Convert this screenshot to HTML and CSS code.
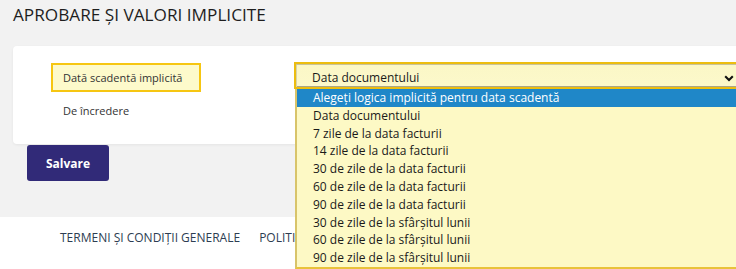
FILE: index.html
```html
<!DOCTYPE html>
<html lang="ro">
<head>
<meta charset="utf-8">
<title>Aprobare și valori implicite</title>
<link rel="stylesheet" href="styles.css">
</head>
<body>
<div class="page">
  <header class="page-head">
    <h1 class="page-title">APROBARE ȘI VALORI IMPLICITE</h1>
  </header>
  <main class="content">
    <section class="card">
      <div class="labels">
        <div class="label label-active">Dată scadentă implicită</div>
        <div class="label">De încredere</div>
      </div>
      <div class="fields">
        <div class="select">
          <span class="select-value">Data documentului</span>
          <svg class="chevron" width="10" height="7" viewBox="0 0 10 7"><path d="M1.2 1.3 L5 5 L8.8 1.3" fill="none" stroke="#111" stroke-width="2.1"/></svg>
        </div>
      </div>
    </section>
    <button class="save-btn" type="button">Salvare</button>
  </main>
  <footer class="footer">
    <a class="footer-link" href="#">TERMENI ȘI CONDIȚII GENERALE</a>
    <a class="footer-link" href="#">POLITICA DE CONFIDENȚIALITATE</a>
  </footer>
  <ul class="dropdown">
    <li class="option option-selected">Alegeți logica implicită pentru data scadentă</li>
    <li class="option">Data documentului</li>
    <li class="option">7 zile de la data facturii</li>
    <li class="option">14 zile de la data facturii</li>
    <li class="option">30 de zile de la data facturii</li>
    <li class="option">60 de zile de la data facturii</li>
    <li class="option">90 de zile de la data facturii</li>
    <li class="option">30 de zile de la sfârșitul lunii</li>
    <li class="option">60 de zile de la sfârșitul lunii</li>
    <li class="option">90 de zile de la sfârșitul lunii</li>
  </ul>
</div>
</body>
</html>
```
FILE: styles.css
```css
html, body {
  margin: 0;
  padding: 0;
}
body {
  background: #f2f2f2;
  font-family: "Open Sans", "DejaVu Sans", sans-serif;
  color: #222;
  overflow: hidden;
}
.page {
  position: relative;
  width: 736px;
  height: 269px;
  overflow: hidden;
}
.page-head {
  padding: 3px 13px 19px;
}
.page-title {
  margin: 0;
  font-size: 17.2px;
  line-height: 24px;
  font-weight: 400;
  color: #1e1e1e;
}
.content {
  padding-left: 13px;
}
.card {
  display: flex;
  width: 780px;
  box-sizing: border-box;
  height: 98px;
  padding: 16px 0 0 38px;
  background: #fff;
  border-radius: 4px;
  box-shadow: 0 1px 3px rgba(0, 0, 0, 0.06);
}
.labels {
  display: flex;
  flex-direction: column;
  gap: 4px;
  width: 150px;
  margin-top: 1px;
}
.label {
  box-sizing: border-box;
  height: 29px;
  padding: 0 10px;
  border: 2px solid transparent;
  font-size: 11px;
  line-height: 25px;
  color: #333;
}
.label-active {
  background: #fdfacb;
  border-color: #f6c612;
}
.fields {
  margin-left: 93px;
}
.select {
  display: flex;
  justify-content: space-between;
  align-items: flex-start;
  box-sizing: border-box;
  width: 450px;
  height: 27px;
  padding: 6px 8px 0 16px;
  border: 2px solid #ecbd10;
  background: linear-gradient(#fbf7c6, #fcf8cb);
  box-shadow: inset 0 1px 0 #c8c39a, inset 1px 0 0 #d8d3a8, inset 0 -1px 0 #aaa68a;
  font-size: 12px;
  line-height: 16px;
  color: #1a1a1a;
}
.chevron {
  margin-top: 5px;
}
.save-btn {
  display: block;
  margin: 1px 0 0 14px;
  width: 82px;
  height: 36px;
  padding: 0;
  border: 0;
  border-radius: 3px;
  background: #312a78;
  color: #fff;
  font-family: "Open Sans", "DejaVu Sans", sans-serif;
  font-size: 12px;
  font-weight: 700;
}
.footer {
  display: flex;
  gap: 19px;
  margin-top: 36px;
  height: 60px;
  padding: 13px 0 0 60px;
  background: #fff;
  box-sizing: border-box;
}
.footer-link {
  font-family: "Open Sans", "DejaVu Sans", sans-serif;
  font-size: 12px;
  line-height: 16px;
  color: #2d3d52;
  text-decoration: none;
  white-space: nowrap;
}
.dropdown {
  position: absolute;
  left: 295px;
  top: 89px;
  width: 460px;
  margin: 0;
  padding: 0;
  list-style: none;
  background: #fdf9c5;
  border-left: 2px solid #d8c46a;
  border-bottom: 2px solid #e9c23a;
}
.option {
  height: 17.8px;
  padding-left: 16px;
  font-size: 12px;
  line-height: 17.8px;
  color: #1a1a1a;
  white-space: nowrap;
}
.option-selected {
  background: #1f87c8;
  color: #fff;
}
```
